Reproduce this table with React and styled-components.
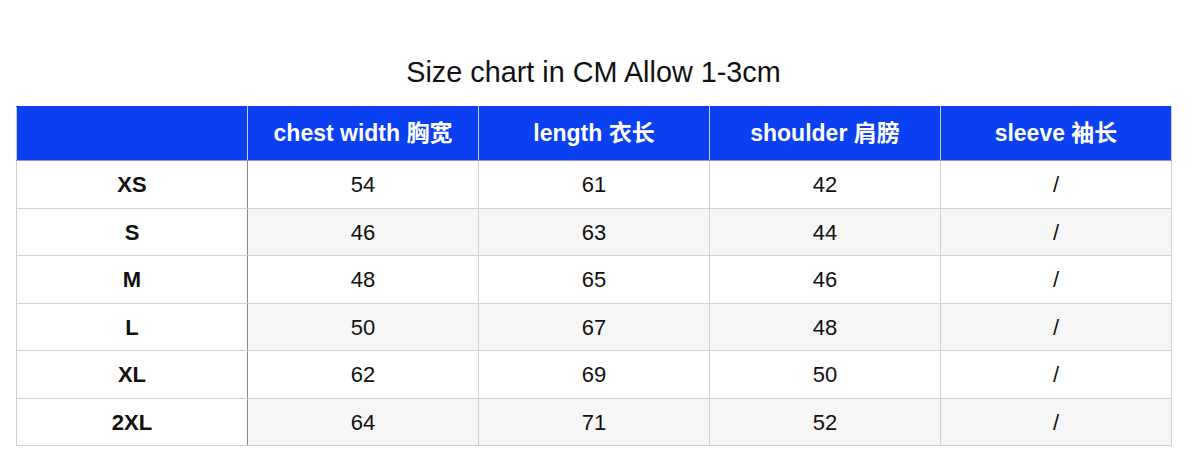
import React from 'react';
import styled, { createGlobalStyle } from 'styled-components';

const rows = [
  ['XS', 54, 61, 42, '/'],
  ['S', 46, 63, 44, '/'],
  ['M', 48, 65, 46, '/'],
  ['L', 50, 67, 48, '/'],
  ['XL', 62, 69, 50, '/'],
  ['2XL', 64, 71, 52, '/'],
];

const heads = ['', 'chest width 胸宽', 'length 衣长', 'shoulder 肩膀', 'sleeve 袖长'];

const App = () => (
  <>
    <GlobalStyle />
    <Page>
      <Title>Size chart in CM Allow 1-3cm</Title>
      <Table>
        <thead>
          <tr>
            {heads.map((h, i) => (
              <Th key={i}>{h}</Th>
            ))}
          </tr>
        </thead>
        <tbody>
          {rows.map((r, ri) => (
            <tr key={r[0]}>
              <SizeCell>{r[0]}</SizeCell>
              {r.slice(1).map((v, ci) => (
                <Td key={ci} shaded={ri % 2 === 1}>
                  {v}
                </Td>
              ))}
            </tr>
          ))}
        </tbody>
      </Table>
    </Page>
  </>
);

const GlobalStyle = createGlobalStyle`
  body {
    margin: 0;
    background: #fff;
    font-family: "Liberation Sans", Arial, "Noto Sans CJK SC", sans-serif;
    color: #111;
  }
`;

const Page = styled.div`
  width: 1200px;
  height: 469px;
  padding: 56px 0 0 16px;
  box-sizing: border-box;
`;

const Title = styled.h1`
  width: 1155px;
  margin: 0 0 18px;
  text-align: center;
  font-size: 28.8px;
  font-weight: 400;
  line-height: 32px;
  color: #111;
`;

const Table = styled.table`
  width: 1156px;
  border-collapse: collapse;
  table-layout: fixed;
`;

const Th = styled.th`
  height: 48px;
  padding: 0 0 5px;
  background: #0a40f2;
  color: #fff;
  font-size: 23px;
  font-weight: 700;
  text-align: center;
  border: 1px solid #c8cde0;
  border-top-color: #0a40f2;
  border-bottom: 1px solid #8899cc;
`;

const Td = styled.td`
  height: 44.5px;
  padding: 2px 0 0;
  text-align: center;
  font-size: 22px;
  color: #111;
  background: ${(p) => (p.shaded ? '#f6f6f6' : '#fff')};
  border: 1px solid #d0d0d0;
`;

const SizeCell = styled(Td)`
  font-weight: 700;
  background: #fff;
  border-right: 1px solid #8a8a8a;
`;

export default App;
